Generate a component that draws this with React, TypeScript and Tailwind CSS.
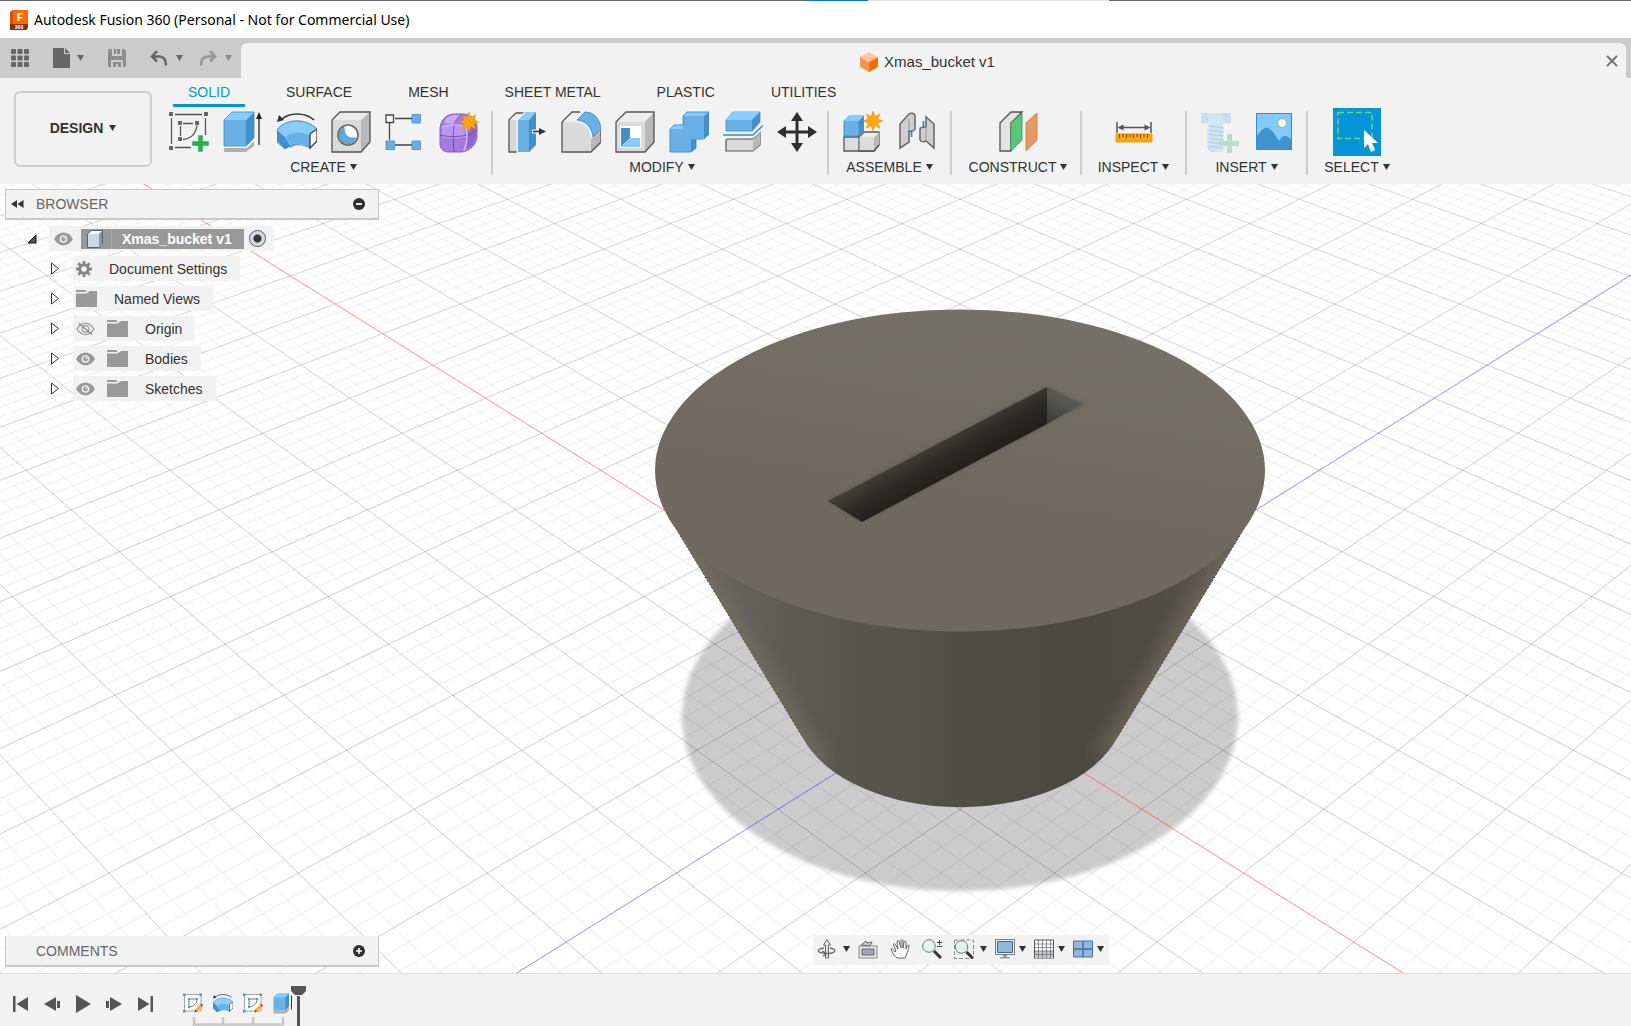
import type { ReactNode } from "react";

const NAV_TABS = ["SOLID", "SURFACE", "MESH", "SHEET METAL", "PLASTIC", "UTILITIES"];

function Caret({ className = "text-[#333]" }: { className?: string }) {
  return (
    <svg width="7" height="6" viewBox="0 0 7 6" className={`shrink-0 ${className}`} aria-hidden="true">
      <path d="M0 0h7L3.5 6z" fill="currentColor" />
    </svg>
  );
}

/* ---------- Ribbon icons (40 x 42) ---------- */

function Icon({ children, label, size = "lg" }: { children: ReactNode; label: string; size?: "lg" | "sm" }) {
  return (
    <svg
      viewBox="0 0 40 42"
      role="img"
      aria-label={label}
      className={size === "lg" ? "h-[42px] w-10 shrink-0" : "h-[21px] w-5 shrink-0"}
    >
      {children}
    </svg>
  );
}

function SketchIcon() {
  return (
    <Icon label="Create Sketch">
      <path d="M6 3.5h27M2.500 7v26M36.500 7v17M6 36.500h16M14 12.500h10M11.500 15v10M14 28.500c9-1 13-7 14-14" fill="none" stroke="#555" strokeWidth="1.300" />
      <g fill="#666">
        <path d="M0 1h4v4H0zM35 1h4v4h-4zM0 35h4v4H0zM9 10h4v4H9zM26 10h4v4h-4zM9 26h4v4H9z" />
      </g>
      <path d="M29 24h5v6h6v5h-6v6h-5v-6h-6v-5h6z" fill="#27ae4f" stroke="#f2f2f2" strokeWidth="0.500" />
    </Icon>
  );
}

function ExtrudeIcon() {
  return (
    <Icon label="Extrude">
      <path d="M1 37l23 0 7-7v5l-8 6H1z" fill="#b0b0b0" />
      <path d="M1 9h22v26H1z" fill="#68b0e6" />
      <path d="M1 9l8-8h22l-8 8z" fill="#8accff" />
      <path d="M23 9l8-8v26l-8 8z" fill="#4190cb" />
      <path d="M1 9l8-8h22v26l-8 8H1z" fill="none" stroke="#3b8ac6" strokeWidth="0.800" />
      <path d="M36 6v28" stroke="#222" strokeWidth="1.300" />
      <path d="M36 1l3 7h-6z" fill="#222" />
    </Icon>
  );
}

function RevolveIcon({ size }: { size?: "lg" | "sm" }) {
  return (
    <Icon label="Revolve" size={size}>
      <path d="M4 9C12 1 28 1 37 9" fill="none" stroke="#333" strokeWidth="1.500" />
      <path d="M0 11l2-7 5 5z" fill="#333" />
      <path d="M0 19C9 7 29 7 40 18l-7 7c-7-5-17-5-25 2z" fill="#8accff" />
      <path d="M8 26c8-6 18-6 25-1v12c-7-5-13-5-18-1z" fill="#68b0e6" />
      <path d="M0 19l8 7 7 11-3-1-4 2-8-8z" fill="#4190cb" />
      <path d="M0 19C9 7 29 7 40 18M0 19v12l8 7c5-5 18-6 25-1" fill="none" stroke="#3b8ac6" strokeWidth="1" />
      <path d="M33 23l7-5v12l-7 7z" fill="#fff" stroke="#444" strokeWidth="1.400" />
    </Icon>
  );
}

function HoleIcon() {
  return (
    <Icon label="Hole">
      <path d="M1 9l8-8h30v30l-9 10H1z" fill="#ececec" />
      <path d="M1 9h29v32H1z" fill="#dadada" />
      <path d="M30 9l9-8v30l-9 10z" fill="#b8b8b8" />
      <path d="M1 9l8-8h30v30l-9 10H1z" fill="none" stroke="#555" strokeWidth="1.300" />
      <circle cx="17" cy="24" r="10" fill="#fff" stroke="#666" strokeWidth="1.600" />
      <path d="M13 16c0 8 4 12 12 11-2 4-5 6-8 6-9-1-12-12-4-17z" fill="#5fa9df" stroke="#3b8ac6" strokeWidth="0.700" />
    </Icon>
  );
}

function PatternIcon() {
  return (
    <Icon label="Rectangular Pattern">
      <path d="M10 7.500h17M10 34h17M4.500 12v17" stroke="#444" strokeWidth="1.300" fill="none" />
      <path d="M1 4h7.500v7.500H1z" fill="#fff" stroke="#444" strokeWidth="1.300" />
      <path d="M27 3.500h8.500v8.500h-8.500zM27 30h8.500v8.500h-8.500zM1 30h8.500v8.500H1z" fill="#68b0e6" stroke="#3b8ac6" strokeWidth="0.800" />
    </Icon>
  );
}

function Burst() {
  return (
    <path
      d="M10 0l1.900 5.500L17 2.700 14.700 8 20 10l-5.300 2 2.300 5.300-5.100-2.800L10 20l-1.900-5.500L3 17.300 5.300 12 0 10l5.300-2L3 2.700l5.100 2.800z"
      fill="#ffa70a"
      stroke="#e08a00"
      strokeWidth="0.500"
    />
  );
}

function FormIcon() {
  return (
    <Icon label="Create Form">
      <path d="M1 18c0-8 6-15 14-15h10c8 1 12 6 13 12v10c0 8-7 15-15 16H9c-5 0-8-4-8-8z" fill="#a67be0" stroke="#8a5fc6" strokeWidth="1" />
      <path d="M5 12C7 6 11 4 16 4h8c-5 2-7 5-8 9z" fill="#c9aaf5" />
      <path d="M3 16c6-3 14-3 23 0v10c-8 2-16 2-23 0z" fill="#bb96ef" />
      <path d="M29 17l8-5v12c-1 8-5 12-9 14z" fill="#8f66c9" />
      <path d="M1 24c9 2 18 2 27 0 5-1 8-3 10-6M15 14c-1 9-1 18 0 27M15 14c1-5 4-8 8-10" fill="none" stroke="#7347ad" strokeWidth="0.900" />
      <path d="M3 16c8-3 16-3 24 0 2 8 1 16-2 24" fill="none" stroke="#dcc8fa" strokeWidth="1.200" />
      <g transform="translate(20 1)">
        <Burst />
      </g>
    </Icon>
  );
}

function PressPullIcon() {
  return (
    <Icon label="Press Pull">
      <path d="M2 9l7-7h9l-7 7v32H2z" fill="#d8d8d8" stroke="#555" strokeWidth="1.300" />
      <path d="M3 9l6-6h8l-7 6z" fill="#f2f2f2" />
      <path d="M9.500 8l9-8v42h-9z" fill="#f2f2f2" />
      <path d="M11 9h12v32H11z" fill="#68b0e6" />
      <path d="M11 9l8-8h10l-7 8z" fill="#8accff" />
      <path d="M22 9l7-8v33l-7 7z" fill="#4190cb" />
      <path d="M25 20.500h10" stroke="#f2f2f2" strokeWidth="4" />
      <path d="M26 20.500h8" stroke="#333" strokeWidth="1.600" />
      <path d="M32 17l7 3.500-7 3.500z" fill="#333" />
    </Icon>
  );
}

function FilletIcon() {
  return (
    <Icon label="Fillet">
      <path d="M1 11L11 1h8l-4 9c10 1 16 8 17 18v13H1z" fill="#f0f0f0" />
      <path d="M1 11h13c10 1 16 8 16 18v12H1z" fill="#dadada" />
      <path d="M30 28l10-9v12l-10 10z" fill="#b8b8b8" />
      <path d="M19 1l-8 0L1 11v30h29l10-10V19" fill="none" stroke="#555" strokeWidth="1.300" />
      <path d="M16 9l8-8c9 0 15 7 16 17l-8 8c-1-10-7-16-16-17z" fill="#68b0e6" stroke="#3b8ac6" strokeWidth="0.900" />
    </Icon>
  );
}

function ShellIcon() {
  return (
    <Icon label="Shell">
      <path d="M1 11L11 1h28v30l-9 10H1z" fill="#ececec" />
      <path d="M1 11h29v30H1z" fill="#dadada" />
      <path d="M30 11l9-10v30l-9 10z" fill="#b8b8b8" />
      <path d="M1 11L11 1h28v30l-9 10H1z" fill="none" stroke="#555" strokeWidth="1.300" />
      <path d="M5 15h21v22H5z" fill="#fff" />
      <path d="M6 17h9v10l-9 9z" fill="#4190cb" />
      <path d="M6 36l9-9h10v9z" fill="#8accff" />
    </Icon>
  );
}

function CombineIcon() {
  return (
    <Icon label="Combine">
      <path d="M1 18h13V5l4-4h22v22l-7 5h-6v9l-5 4H1z" fill="#68b0e6" />
      <path d="M14 5l4-4h22l-5 4zM1 18l4-4h9v4z" fill="#8accff" />
      <path d="M35 5l5-4v22l-5 5zM22 28h5v9l-5 4z" fill="#4190cb" />
      <path d="M1 18l4-4h9V5l4-4h22v22l-5 5h-8v9l-5 4H1z" fill="none" stroke="#3b8ac6" strokeWidth="0.900" />
    </Icon>
  );
}

function SplitIcon() {
  return (
    <Icon label="Split Body">
      <path d="M3 9l7-8h27v10l-8 9H3z" fill="#68b0e6" stroke="#3b8ac6" strokeWidth="0.800" />
      <path d="M3 9l7-8h27l-8 8z" fill="#8accff" />
      <path d="M29 9l8-8v10l-8 9z" fill="#4190cb" />
      <path d="M3 29l2-1h25l7-6v12l-7 6H3z" fill="#dadada" stroke="#555" strokeWidth="1.200" />
      <path d="M30 28l7-6v12l-7 6z" fill="#b8b8b8" />
      <path d="M0 24h30L40 14.500" fill="none" stroke="#f2f2f2" strokeWidth="5" />
      <path d="M0 24h30L40 14.500" fill="none" stroke="#2f8fd8" strokeWidth="1.500" />
    </Icon>
  );
}

function MoveIcon() {
  return (
    <Icon label="Move">
      <path d="M20 7v28M6 21h28" stroke="#2f2f2f" strokeWidth="3" />
      <path d="M20 1l6 9H14zM20 41l6-9H14zM0 21l9-6v12zM40 21l-9-6v12z" fill="#2f2f2f" />
    </Icon>
  );
}

function NewComponentIcon() {
  return (
    <Icon label="New Component">
      <path d="M16 26l5-5h15v13l-5 6H16z" fill="#eee" stroke="#555" strokeWidth="1.300" />
      <path d="M31 27l5-6v13l-5 6z" fill="#b8b8b8" />
      <path d="M1 26h15v14H1z" fill="#dcdcdc" stroke="#555" strokeWidth="1.300" />
      <path d="M16.500 26H31v13.500H16.500z" fill="#dcdcdc" />
      <path d="M16 40h15l5-6" fill="none" stroke="#555" strokeWidth="1.300" />
      <path d="M1 10l5-5h15l-5 5v15H1z" fill="#68b0e6" stroke="#3b8ac6" strokeWidth="0.900" />
      <path d="M1 10l5-5h15l-5 5z" fill="#8accff" />
      <path d="M16 10l5-5v15l-5 5z" fill="#4190cb" />
      <g transform="translate(20 0)">
        <Burst />
      </g>
    </Icon>
  );
}

function JointIcon() {
  return (
    <Icon label="Joint">
      <path d="M3 13l8-9c2-3 7-2 7 1v13c-1 2-4 3-6 2v11l-9 6z" fill="#cfcfcf" stroke="#666" strokeWidth="1.500" />
      <path d="M12 8v12" stroke="#999" strokeWidth="1" />
      <path d="M14.500 19v7M26.500 10v6" stroke="#2f8fd8" strokeWidth="1.800" />
      <path d="M37 13l-8-7v10c-3 0-6 0-6 2v11c1 2 4 2 6 1l8 7z" fill="#cfcfcf" stroke="#666" strokeWidth="1.500" />
      <path d="M29 16v14" stroke="#999" strokeWidth="1" />
    </Icon>
  );
}

function PlaneIcon() {
  return (
    <Icon label="Offset Plane">
      <path d="M2 12L13 1h11L13 12v28H2z" fill="#e3e3e3" stroke="#555" strokeWidth="1.300" />
      <path d="M13 12L24 2v27L13 40z" fill="#58c77a" stroke="#34a058" strokeWidth="0.900" />
      <path d="M28 12L39 2v27L28 40z" fill="#e59a66" stroke="#cf7d45" strokeWidth="0.900" />
    </Icon>
  );
}

function MeasureIcon() {
  return (
    <Icon label="Measure">
      <path d="M3 11v11M37 11v11M6 16.500h28" stroke="#555" strokeWidth="1.500" />
      <path d="M3.500 16.500l6-3v6zM36.500 16.500l-6-3v6z" fill="#555" />
      <path d="M2 23h36v8H2z" fill="#ffa70a" stroke="#e09000" strokeWidth="0.800" />
      <path d="M5.500 23v4M9 23v3M12.500 23v4M16 23v3M19.500 23v4M23 23v3M26.500 23v4M30 23v3M33.500 23v4" stroke="#6b4700" strokeWidth="1" />
    </Icon>
  );
}

function FastenerIcon() {
  return (
    <Icon label="Insert Fastener">
      <path d="M1 2h30v10H1z" fill="#c7dcec" />
      <path d="M8 2h15v10H8z" fill="#d5e6f3" />
      <path d="M9 12h14v28l-3 1h-9l-3-2z" fill="#cfe2f0" />
      <path d="M7 15l17 2M7 19l17 2M7 23l17 2M7 27l17 2M7 31l17 2M7 35l17 2" stroke="#b4cfe2" strokeWidth="1.200" />
      <path d="M27 23h5v7h7v5h-7v7h-5v-7h-7v-5h7z" fill="#b8e0c4" />
    </Icon>
  );
}

function CanvasIcon() {
  return (
    <Icon label="Canvas">
      <path d="M2 2h36v37H2z" fill="#82cbff" />
      <path d="M2 27c5-9 9-11 12-10 5 2 8 9 11 13 4-6 7-7 13-1v10H2z" fill="#4093ce" />
      <circle cx="28" cy="12" r="4.500" fill="#fdfbd6" stroke="#6fb0dd" />
      <path d="M2.500 2.500h35v36h-35z" fill="none" stroke="#3b8ac6" />
    </Icon>
  );
}

function SelectIcon() {
  return (
    <span className="-mt-[3px] flex h-12 w-12 items-center justify-center bg-[#0696d7]">
      <svg viewBox="0 0 48 48" className="h-12 w-12" role="img" aria-label="Select">
        <path d="M5 4.500h34v26H5z" fill="none" stroke="#5ddc8c" strokeWidth="1.500" strokeDasharray="6 3" />
        <path d="M31 22v18l4-4 3 8 4-2-3-7h6z" fill="#fff" />
      </svg>
    </span>
  );
}

function SketchEditIcon() {
  return (
    <Icon label="Sketch" size="sm">
      <path d="M3 3h33v33H3z" fill="#fdfdfd" stroke="#999" strokeWidth="1.800" />
      <path d="M12 12h16c0 9-6 15-16 16z" fill="none" stroke="#666" strokeWidth="1.800" />
      <path d="M0 1h5v5H0zM33 1h5v5h-5zM0 34h5v5H0zM10 10h4v4h-4zM26 10h4v4h-4zM10 26h4v4h-4z" fill="#35a0e8" />
      <path d="M23 38l2-6 9-9 5 5-10 9z" fill="#f3b13c" />
      <path d="M34 23l3-2 3 4-2 3z" fill="#e8333a" />
      <path d="M23 39l2-6 3 4z" fill="#444" />
    </Icon>
  );
}

/* ---------- Ribbon ---------- */

interface RibbonGroup {
  label: string;
  className: string;
  icons: ReactNode[];
}

const GROUPS: RibbonGroup[] = [
  {
    label: "CREATE",
    className: "w-[333px] pr-1",
    icons: [<SketchIcon />, <ExtrudeIcon />, <RevolveIcon />, <HoleIcon />, <PatternIcon />, <FormIcon />],
  },
  {
    label: "MODIFY",
    className: "w-[336px] pl-1",
    icons: [<PressPullIcon />, <FilletIcon />, <ShellIcon />, <CombineIcon />, <SplitIcon />, <MoveIcon />],
  },
  { label: "ASSEMBLE", className: "w-[123px]", icons: [<NewComponentIcon />, <JointIcon />] },
  { label: "CONSTRUCT", className: "w-[130px] pl-1", icons: [<PlaneIcon />] },
  { label: "INSPECT", className: "w-[105px]", icons: [<MeasureIcon />] },
  { label: "INSERT", className: "w-[121px]", icons: [<FastenerIcon />, <CanvasIcon />] },
  { label: "SELECT", className: "w-[100px] border-transparent", icons: [<SelectIcon />] },
];

function Ribbon() {
  return (
    <div className="flex h-[106px] shrink-0 bg-[#f2f2f2]">
      <div className="w-40 shrink-0 pt-[13px] pl-[14px]">
        <button className="flex h-[76px] w-[138px] items-center justify-center gap-1.5 rounded-md border-2 border-[#cecece] pb-0.5 text-sm font-bold">
          DESIGN <Caret />
        </button>
      </div>
      <div className="flex min-w-0 flex-col">
        <div className="flex h-[29px] shrink-0 gap-[26px] pl-[13px]" role="tablist">
          {NAV_TABS.map((tab, i) => (
            <button
              key={tab}
              role="tab"
              aria-selected={i === 0}
              className={`border-b-[3px] px-[15px] pt-0.5 text-sm whitespace-nowrap ${
                i === 0 ? "border-[#0696d7] text-[#0696d7]" : "border-transparent"
              }`}
            >
              {tab}
            </button>
          ))}
        </div>
        <div className="flex pt-1">
          {GROUPS.map((group) => (
            <div
              key={group.label}
              className={`flex h-16 shrink-0 flex-col items-center border-r-2 border-[#cecece] ${group.className}`}
            >
              <div className="flex h-[42px]">
                {group.icons.map((icon, i) => (
                  <button key={i} className="flex w-[54px] justify-center">
                    {icon}
                  </button>
                ))}
              </div>
              <button className="mt-1.5 flex items-center gap-1 text-sm leading-4">
                {group.label} <Caret />
              </button>
            </div>
          ))}
        </div>
      </div>
    </div>
  );
}

/* ---------- Title and quick access bars ---------- */

function TitleBar() {
  return (
    <header className="shrink-0 bg-white">
      <div className="flex h-px">
        <div className="flex-[808] bg-[#666]" />
        <div className="flex-[60] bg-[#0078d7]" />
        <div className="flex-[241] bg-[#e5e5e5]" />
        <div className="flex-[522] bg-[#666]" />
      </div>
      <div className="flex h-[37px] items-center gap-[6px] pl-[10px]">
        <svg width="18" height="20" viewBox="0 0 18 20" aria-hidden="true">
          <path d="M0 2l3-2h15v18l-2 2H0z" fill="#ff6b00" />
          <path d="M0 2l3-2v14H0z" fill="#d95400" />
          <path d="M0 14h18v4l-2 2H0z" fill="#8a3300" />
          <text x="10" y="11" fontSize="10" fontWeight="700" fill="#fff" textAnchor="middle">F</text>
          <text x="9" y="19" fontSize="5" fontWeight="700" fill="#fff" textAnchor="middle">360</text>
        </svg>
        <h1 className="font-['Noto_Sans',sans-serif] text-sm text-black">
          Autodesk Fusion 360 (Personal - Not for Commercial Use)
        </h1>
      </div>
    </header>
  );
}

function QuickAccess() {
  return (
    <div className="flex h-10 w-[241px] shrink-0 items-center pl-[11px] text-[#666]">
      <button aria-label="Show data panel">
        <svg width="18" height="18" viewBox="0 0 18 18" fill="currentColor">
          {[0, 6.500, 13].map((x) =>
            [0, 6.500, 13].map((y) => <rect key={`${x}-${y}`} x={x} y={y} width="5" height="5" rx="0.800" />)
          )}
        </svg>
      </button>
      <button aria-label="File" className="ml-6 flex items-center gap-[7px]">
        <svg width="17" height="20" viewBox="0 0 17 20" fill="currentColor">
          <path d="M0 0h11v6h6v14H0zM12 0l5 5h-5z" />
        </svg>
        <Caret className="text-[#666]" />
      </button>
      <button aria-label="Save" className="ml-6 text-[#8c8c8c]">
        <svg width="18" height="18" viewBox="0 0 18 18" fill="currentColor">
          <path d="M0 1l1-1h3v7h10V0h2l2 2v15l-1 1h-2v-7H3v7H1l-1-1zM6 0h2v5H6zM9 0h3v5H9zM5 13h8v5h-3v-3H8v3H5z" />
        </svg>
      </button>
      <button aria-label="Undo" className="ml-6 flex items-center gap-2">
        <svg width="18" height="16" viewBox="0 0 18 16" fill="none" stroke="currentColor" strokeWidth="2.500">
          <path d="M7 1L2 6.500l5 5M2 6.500h7c5 0 7 4 7 9" />
        </svg>
        <Caret className="text-[#666]" />
      </button>
      <button aria-label="Redo" className="ml-4 flex items-center gap-2 text-[#959595]">
        <svg width="18" height="16" viewBox="0 0 18 16" fill="none" stroke="currentColor" strokeWidth="2.500">
          <path d="M11 1l5 5.500-5 5M16 6.500H9c-5 0-7 4-7 9" />
        </svg>
        <Caret className="text-[#8c8c8c]" />
      </button>
    </div>
  );
}

function DocumentBar() {
  return (
    <div className="flex h-10 shrink-0 bg-[#cbcbcb] pr-[5px]">
      <QuickAccess />
      <div className="mt-[5px] flex flex-1 items-center rounded-t-md bg-[#f2f2f2]">
        <div className="flex flex-1 items-center justify-center gap-[6px] pt-[3px] pl-2 text-[15px]">
          <svg width="18" height="20" viewBox="0 0 18 20" aria-hidden="true">
            <path d="M9 0l9 5-9 5-9-5z" fill="#ffc49c" />
            <path d="M0 5l9 5v10l-9-5z" fill="#ff9350" />
            <path d="M18 5l-9 5v10l9-5z" fill="#ff6b00" />
          </svg>
          Xmas_bucket v1
        </div>
        <button aria-label="Close" className="mr-2 text-[#777]">
          <svg width="12" height="12" viewBox="0 0 12 12" stroke="currentColor" strokeWidth="2">
            <path d="M1 1l10 10M11 1L1 11" />
          </svg>
        </button>
      </div>
    </div>
  );
}

/* ---------- 3D canvas ---------- */

// Ground plane point (p, q) in major grid cells -> screen position.
function project(p: number, q: number) {
  const v = p + q - 2;
  const w = 1 - 0.038 * v;
  const x = 960 + ((p - q) * 90.95) / w;
  const y = (809.3 + 30.55 * v) / w;
  return `${x.toFixed(1)} ${y.toFixed(1)}`;
}

function gridPath(major: boolean) {
  const parts: string[] = [];
  for (let i = -100; i <= 60; i++) {
    if (i === 0 || (i % 5 === 0) !== major) continue;
    const t = i / 5;
    parts.push(`M${project(t, -24)}L${project(t, 12)}M${project(-24, t)}L${project(12, t)}`);
  }
  return parts.join("");
}

function Scene() {
  return (
    <svg
      viewBox="0 184 1631 789"
      preserveAspectRatio="xMidYMid slice"
      className="absolute inset-0 h-full w-full"
      role="img"
      aria-label="Model view"
    >
      <defs>
        <linearGradient id="side" gradientUnits="userSpaceOnUse" x1="670" y1="0" x2="1250" y2="0">
          <stop offset="0" stopColor="#6c685e" />
          <stop offset="0.140" stopColor="#62605a" />
          <stop offset="0.280" stopColor="#585750" />
          <stop offset="0.480" stopColor="#504f48" />
          <stop offset="0.680" stopColor="#4b4941" />
          <stop offset="0.820" stopColor="#4e4b43" />
          <stop offset="1" stopColor="#5f5b50" />
        </linearGradient>
        <linearGradient id="top" x1="0.800" y1="0" x2="0.500" y2="1">
          <stop offset="0" stopColor="#75726a" />
          <stop offset="0.500" stopColor="#6f6b62" />
          <stop offset="1" stopColor="#6e695f" />
        </linearGradient>
        <linearGradient id="slot" gradientUnits="userSpaceOnUse" x1="930" y1="440" x2="954" y2="482">
          <stop offset="0" stopColor="#45433c" />
          <stop offset="0.450" stopColor="#2b2a26" />
          <stop offset="1" stopColor="#1d1c1a" />
        </linearGradient>
        <linearGradient id="slotEnd" x1="0.700" y1="0" x2="0.200" y2="1">
          <stop offset="0" stopColor="#62625c" />
          <stop offset="0.500" stopColor="#51534f" />
          <stop offset="1" stopColor="#3b3c38" />
        </linearGradient>
        <linearGradient id="gridMinor" gradientUnits="userSpaceOnUse" x1="0" y1="184" x2="0" y2="600">
          <stop offset="0" stopColor="#000" stopOpacity="0.050" />
          <stop offset="1" stopColor="#000" stopOpacity="0.075" />
        </linearGradient>
        <linearGradient id="gridMajor" gradientUnits="userSpaceOnUse" x1="0" y1="184" x2="0" y2="600">
          <stop offset="0" stopColor="#000" stopOpacity="0.160" />
          <stop offset="1" stopColor="#000" stopOpacity="0.200" />
        </linearGradient>
        <filter id="soft" x="-10%" y="-10%" width="120%" height="120%">
          <feGaussianBlur stdDeviation="2" />
        </filter>
        <filter id="glow" filterUnits="userSpaceOnUse" x="600" y="450" width="720" height="400">
          <feGaussianBlur stdDeviation="9" />
        </filter>
        <clipPath id="body">
          <path d="M670 519L803 738A165 100 0 0 0 1117 738L1250 519z" />
        </clipPath>
      </defs>

      <rect y="184" width="1631" height="789" fill="#fff" />
      <ellipse cx="960" cy="717" rx="278" ry="174" fill="#cbcbcb" filter="url(#soft)" />
      <path d={gridPath(false)} stroke="url(#gridMinor)" fill="none" />
      <path d={gridPath(true)} stroke="url(#gridMajor)" fill="none" />
      <path d={`M${project(-24, 0)}L${project(12, 0)}`} stroke="#ff2020" strokeOpacity="0.5" />
      <path d={`M${project(0, -24)}L${project(0, 12)}`} stroke="#2020ff" strokeOpacity="0.5" />

      <path d="M670 519L803 738A165 100 0 0 0 1117 738L1250 519z" fill="url(#side)" />
      <g clipPath="url(#body)">
        <path d="M660 503L803 738L822 762" fill="none" stroke="#787266" strokeWidth="12" filter="url(#glow)" />
        <path d="M1260 503L1117 738L1104 756" fill="none" stroke="#787266" strokeWidth="12" filter="url(#glow)" />
      </g>
      <path d="M670 519L803 738M1250 519L1117 738" stroke="#33312c" strokeDasharray="1 3" />
      <ellipse cx="960" cy="470.500" rx="305" ry="161" fill="url(#top)" />
      <path d="M826 501L1047 387L1084 404L862 522z" fill="#5b5850" filter="url(#soft)" />
      <path d="M828 501L1047 387V424L862 522z" fill="url(#slot)" />
      <path d="M1047 387L1082 404L1047 424z" fill="url(#slotEnd)" />
    </svg>
  );
}

/* ---------- Browser tree ---------- */

function Eye({ off = false }: { off?: boolean }) {
  return (
    <svg width="19" height="14" viewBox="0 0 20 14" aria-hidden="true">
      {off ? (
        <g fill="none" stroke="#999" strokeWidth="1.300">
          <path d="M1 7c5-8 13-8 18 0-5 8-13 8-18 0z" />
          <circle cx="10" cy="7" r="3.500" />
          <path d="M3 1l14 12" strokeWidth="1.600" />
        </g>
      ) : (
        <>
          <path d="M0 7c5-9 15-9 20 0-5 9-15 9-20 0z" fill="#999" />
          <circle cx="10" cy="7" r="3.300" fill="none" stroke="#f2f2f2" strokeWidth="1.500" />
          <path d="M10 5.500h1.500V7H10z" fill="#f2f2f2" />
        </>
      )}
    </svg>
  );
}

function Folder() {
  return (
    <svg width="21" height="17" viewBox="0 0 21 17" aria-hidden="true">
      <path d="M0 0h9l2 2H0zM0 3.500h10.500L14 1h7v16H0z" fill="#999" />
    </svg>
  );
}

function Gear() {
  return (
    <svg width="16" height="16" viewBox="0 0 16 16" aria-hidden="true">
      <circle cx="8" cy="8" r="4.300" fill="none" stroke="#858585" strokeWidth="3" />
      <path d="M8 0v3M8 13v3M0 8h3M13 8h3M2.300 2.300l2.200 2.200M11.500 11.500l2.200 2.200M2.300 13.700l2.200-2.200M11.500 4.500l2.200-2.200" stroke="#858585" strokeWidth="2.800" />
    </svg>
  );
}

interface TreeNode {
  label: string;
  icon: "gear" | "folder";
  visible?: boolean;
}

const TREE: TreeNode[] = [
  { label: "Document Settings", icon: "gear" },
  { label: "Named Views", icon: "folder" },
  { label: "Origin", icon: "folder", visible: false },
  { label: "Bodies", icon: "folder", visible: true },
  { label: "Sketches", icon: "folder", visible: true },
];

function Browser() {
  return (
    <section className="relative w-[379px] pt-[5px] pl-[5px]">
      <div className="flex h-[31px] items-center border border-b-2 border-[#c8c8c8] bg-[#f2f2f2] pr-[13px] pl-[5px] text-sm text-[#666]">
        <button aria-label="Collapse browser">
          <svg width="13" height="8" viewBox="0 0 13 8" fill="#333">
            <path d="M6 0v8L0 4zM12.500 0v8l-6-4z" />
          </svg>
        </button>
        <h2 className="ml-3 flex-1">BROWSER</h2>
        <button aria-label="Minimize browser">
          <svg width="12" height="12" viewBox="0 0 12 12">
            <circle cx="6" cy="6" r="6" fill="#2f2f2f" />
            <path d="M3 6h6" stroke="#fff" strokeWidth="1.800" />
          </svg>
        </button>
      </div>

      <div className="mt-[6px] flex h-[25px] items-center pl-[22px]">
        <svg width="10" height="10" viewBox="0 0 10 10" aria-hidden="true">
          <path d="M9 1v8H1z" fill="#555" stroke="#111" />
        </svg>
        <div className="ml-3 flex h-[25px] items-center bg-[#f2f2f2] pr-2 pl-[5px]">
          <Eye />
          <div className="ml-2 flex h-5 items-center bg-[#999] text-sm font-bold text-white">
            <svg width="16" height="18" viewBox="0 0 16 18" className="ml-[6px]" aria-hidden="true">
              <path d="M0.500 4l4-3.500h11v13l-3 4h-12z" fill="#f4f6f8" stroke="#555" strokeWidth="0.900" />
              <path d="M1 4h11v13H1z" fill="#cfd8e2" />
              <path d="M12 4l3-3v13l-3 3z" fill="#8b95a3" />
            </svg>
            <span className="ml-2 h-5 border-l border-[#aaa] pr-3 pl-[10px] leading-5">Xmas_bucket v1</span>
          </div>
          <input
            type="radio"
            name="active"
            defaultChecked
            aria-label="Activate component"
            className="ml-[5px] h-[17px] w-[17px] appearance-none rounded-full border border-[#555] bg-radial from-[#333] from-30% to-[#d5dae3] to-45%"
          />
        </div>
      </div>

      <ul className="mt-[5px] flex flex-col gap-[5px]">
        {TREE.map((node) => (
          <li key={node.label} className="flex h-[25px] items-center pl-[46px]">
            <button aria-label={`Expand ${node.label}`}>
              <svg width="8" height="13" viewBox="0 0 8 13" className="block">
                <path d="M0.500 1v11L7.500 6.500z" fill="#fff" stroke="#333" strokeWidth="1" />
              </svg>
            </button>
            <div className="ml-[14px] flex h-[25px] items-center bg-[#f2f2f2] pr-[13px] pl-[3px] text-sm">
              {node.visible !== undefined && (
                <button className="mr-3" aria-label={`Toggle ${node.label}`}>
                  <Eye off={!node.visible} />
                </button>
              )}
              {node.icon === "gear" ? <Gear /> : <Folder />}
              <span className="ml-[17px]">{node.label}</span>
            </div>
          </li>
        ))}
      </ul>
    </section>
  );
}

/* ---------- Navigation bar ---------- */

function NavButton({ label, menu, children }: { label: string; menu?: "near" | "far"; children: ReactNode }) {
  return (
    <button
      aria-label={label}
      className={`flex items-center ${menu === "far" ? "gap-1.5" : menu === "near" ? "gap-1" : "pr-1"}`}
    >
      <svg width="20" height="20" viewBox="0 0 20 20">
        {children}
      </svg>
      {menu && <Caret />}
    </button>
  );
}

function ViewBar() {
  return (
    <div className="flex h-[30px] w-[296px] items-center gap-2 bg-[#f2f2f2] pb-0.5 pl-1">
      <NavButton label="Orbit" menu="far">
        <path d="M8.500 19V6H6.500L10 0.500 13.500 6h-2v13z" fill="#dfe3e8" stroke="#666" />
        <path d="M7 9C-1 10-1 14 9 14.500M13 9c7 1 6 5-1 5.500M5 12l5 2.500L6 17" fill="none" stroke="#666" strokeWidth="1.300" />
      </NavButton>
      <NavButton label="Look At">
        <path d="M1 7h18v12H1z" fill="#e4e7ea" stroke="#888" />
        <path d="M4 10h12v6H4z" fill="#a3a8b1" stroke="#666" />
        <path d="M3 6l5-4 1 2 5-1-2 4z" fill="#ccc" stroke="#666" />
      </NavButton>
      <NavButton label="Pan">
        <path d="M5 13C3 10 1 9 1 10c1 4 4 7 6 9h8c2-4 3-7 4-12 0-2-2-1-3 3V3c0-1-2-1-2 0l-1 6V1.500c0-1-2-1-2 0V9L9 2C8.500 1 7 1.500 7 3l1 7-3-5c-1-1-2 0-1.500 1L6 12z" fill="#fafafa" stroke="#666" />
      </NavButton>
      <NavButton label="Zoom">
        <circle cx="7" cy="7" r="6.300" fill="#e6f0f0" stroke="#777" />
        <path d="M12 12l7 7" stroke="#333" strokeWidth="3" />
        <path d="M15 3.500h5M17.500 1v5M15 7.500h5" stroke="#444" />
      </NavButton>
      <NavButton label="Zoom Window" menu="far">
        <path d="M0.500 1h19v18.500H0.500z" fill="none" stroke="#888" strokeDasharray="4 2" />
        <circle cx="7.500" cy="8" r="6.300" fill="#e6f0f0" stroke="#777" />
        <path d="M12.500 13l6 6" stroke="#333" strokeWidth="3" />
      </NavButton>
      <NavButton label="Display Settings" menu="near">
        <path d="M0.500 0.500h19v15H0.500z" fill="#f4f4f4" stroke="#777" />
        <path d="M2.500 2.500h15v11h-15z" fill="#8fb5e2" stroke="#44628c" />
        <path d="M8 16h4v2h3v1.500H5V18h3z" fill="#999" />
      </NavButton>
      <NavButton label="Grid and Snaps" menu="near">
        <path d="M0.500 1h19v18H0.500z" fill="#fff" stroke="#555" />
        <path d="M1 12h18v7H1z" fill="#c4c8d4" />
        <path d="M4.500 1v18M8.500 1v18M12.500 1v18M16.500 1v18M1 5h18M1 8.500h18M1 12h18M1 15.500h18" stroke="#666" strokeWidth="0.700" />
      </NavButton>
      <NavButton label="Viewports" menu="near">
        <path d="M0.500 2h19v16H0.500z" fill="#94b6e0" stroke="#4f6f9c" />
        <path d="M10 2v16M1 10h18" stroke="#4a6a98" strokeWidth="1.500" />
      </NavButton>
    </div>
  );
}

/* ---------- Timeline ---------- */

const PLAYBACK = [
  { label: "Go to start", d: "M0 1h2.500v16H0zM15 2v14L3.500 9z" },
  { label: "Step back", d: "M12 2v14L0 9zM13 6h3v7h-3z" },
  { label: "Play", d: "M1 0v18L16 9z" },
  { label: "Step forward", d: "M4 2v14L16 9zM0 6h3v7H0z" },
  { label: "Go to end", d: "M13.500 1H16v16h-2.500zM1 2v14L12.500 9z" },
];

function Timeline() {
  return (
    <footer className="flex h-[53px] shrink-0 gap-[18px] border-t border-[#dcdcdc] bg-[#f2f2f2] pl-[5px]">
      <div className="flex items-center pt-2">
        {PLAYBACK.map((item) => (
          <button key={item.label} aria-label={item.label} className="flex w-[31px] justify-center">
            <svg width="16" height="18" viewBox="0 0 16 18" fill="#555">
              <path d={item.d} />
            </svg>
          </button>
        ))}
      </div>
      <div className="relative flex flex-col pt-[19px]">
        <div className="flex">
          {[<SketchEditIcon />, <RevolveIcon size="sm" />, <SketchEditIcon />].map((icon, i) => (
            <button key={i} className="flex w-[30px] justify-center">
              {icon}
            </button>
          ))}
          <button className="flex w-[30px] justify-center">
            <Icon label="Extrude" size="sm">
              <path d="M1 35h25l6-6v6l-7 6H1z" fill="#b0b0b0" />
              <path d="M1 9l8-8h23v26l-7 8H1z" fill="#68b0e6" />
              <path d="M1 9l8-8h23l-7 8z" fill="#8accff" />
              <path d="M25 9l7-8v26l-7 8z" fill="#4190cb" />
              <path d="M37 5v28" stroke="#333" strokeWidth="2" />
            </Icon>
          </button>
        </div>
        <svg width="120" height="9" viewBox="0 0 120 9" className="mt-[3px] shrink-0" aria-hidden="true">
          <path d="M16 0v7.500h89V0M45 0v7M75 0v7" fill="none" stroke="#c8c8c8" strokeWidth="2.500" />
        </svg>
        <svg width="15" height="40" viewBox="0 0 15 40" className="absolute -right-2 bottom-0" aria-label="Timeline marker">
          <path d="M0 0h15v5l-4 4H4L0 5z" fill="#555" />
          <path d="M6 10h3v30H6z" fill="#555" />
        </svg>
      </div>
    </footer>
  );
}

export default function App() {
  return (
    <div className="flex h-screen flex-col overflow-hidden bg-[#f2f2f2] font-['Liberation_Sans',Arial,sans-serif] text-[#333]">
      <TitleBar />
      <DocumentBar />
      <Ribbon />
      <main className="relative flex min-h-0 flex-1 flex-col justify-between overflow-hidden">
        <Scene />
        <Browser />
        <div className="relative grid grid-cols-2 items-end pr-[10px] pb-[6px] pl-[5px]">
          <section className="flex h-[31px] w-[374px] items-center border border-t-0 border-b-2 border-[#c8c8c8] bg-[#f2f2f2] pr-[13px] pl-[30px] text-sm text-[#666]">
            <h2 className="flex-1">COMMENTS</h2>
            <button aria-label="Expand comments">
              <svg width="12" height="12" viewBox="0 0 12 12">
                <circle cx="6" cy="6" r="6" fill="#2f2f2f" />
                <path d="M3 6h6M6 3v6" stroke="#fff" strokeWidth="1.600" />
              </svg>
            </button>
          </section>
          <div className="pb-[2px]">
            <ViewBar />
          </div>
        </div>
      </main>
      <Timeline />
    </div>
  );
}
